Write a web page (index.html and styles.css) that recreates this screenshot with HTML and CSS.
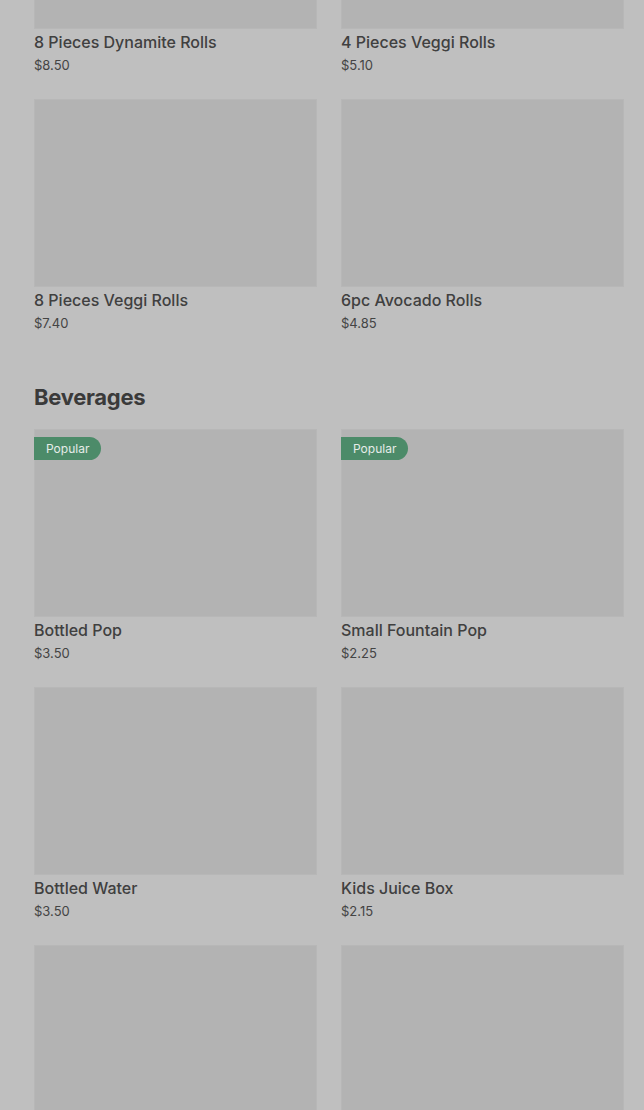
FILE: index.html
```html
<!DOCTYPE html>
<html lang="en">
<head>
    <meta charset="UTF-8">
    <meta name="viewport" content="width=device-width, initial-scale=1.0">
    <title>Menu</title>
    <link rel="stylesheet" href="styles.css">
</head>
<body>
    <main class="menu">
        <section class="menu-section">
            <div class="item-grid">
                <div class="item">
                    <div class="item-image"></div>
                    <div class="item-info">
                        <div class="item-name">8 Pieces Dynamite Rolls</div>
                        <div class="item-price">$8.50</div>
                    </div>
                </div>
                <div class="item">
                    <div class="item-image"></div>
                    <div class="item-info">
                        <div class="item-name">4 Pieces Veggi Rolls</div>
                        <div class="item-price">$5.10</div>
                    </div>
                </div>
                <div class="item">
                    <div class="item-image"></div>
                    <div class="item-info">
                        <div class="item-name">8 Pieces Veggi Rolls</div>
                        <div class="item-price">$7.40</div>
                    </div>
                </div>
                <div class="item">
                    <div class="item-image"></div>
                    <div class="item-info">
                        <div class="item-name">6pc Avocado Rolls</div>
                        <div class="item-price">$4.85</div>
                    </div>
                </div>
            </div>
        </section>

        <section class="menu-section">
            <h2 class="section-title">Beverages</h2>
            <div class="item-grid">
                <div class="item">
                    <div class="item-image">
                        <span class="badge">Popular</span>
                    </div>
                    <div class="item-info">
                        <div class="item-name">Bottled Pop</div>
                        <div class="item-price">$3.50</div>
                    </div>
                </div>
                <div class="item">
                    <div class="item-image">
                        <span class="badge">Popular</span>
                    </div>
                    <div class="item-info">
                        <div class="item-name">Small Fountain Pop</div>
                        <div class="item-price">$2.25</div>
                    </div>
                </div>
                <div class="item">
                    <div class="item-image"></div>
                    <div class="item-info">
                        <div class="item-name">Bottled Water</div>
                        <div class="item-price">$3.50</div>
                    </div>
                </div>
                <div class="item">
                    <div class="item-image"></div>
                    <div class="item-info">
                        <div class="item-name">Kids Juice Box</div>
                        <div class="item-price">$2.15</div>
                    </div>
                </div>
                <div class="item">
                    <div class="item-image"></div>
                </div>
                <div class="item">
                    <div class="item-image"></div>
                </div>
            </div>
        </section>
    </main>
</body>
</html>
```

FILE: styles.css
```css
* {
    margin: 0;
    padding: 0;
    box-sizing: border-box;
}

html, body {
    height: 100%;
    overflow: hidden;
}

body {
    font-family: 'Inter', 'Liberation Sans', sans-serif;
    background: #bfbfbf;
    color: #3d3d3d;
}

/* page is scrolled: first row of images is cut off at the top */
.menu {
    margin-top: -159px;
    padding: 0 20px 0 34px;
}

.menu-section + .menu-section {
    margin-top: 48px;
}

.section-title {
    font-size: 22px;
    font-weight: 700;
    line-height: 32px;
    letter-spacing: -0.3px;
    color: #3a3a3a;
    margin-bottom: 16px;
}

.item-grid {
    display: grid;
    grid-template-columns: 1fr 1fr;
    column-gap: 24px;
    row-gap: 24px;
}

.item-image {
    position: relative;
    height: 188px;
    background: #b3b3b3;
    border: 1px solid #b7b7b7;
}

.badge {
    position: absolute;
    top: 7px;
    left: -1px;
    height: 23px;
    padding: 0 12px;
    display: flex;
    align-items: center;
    font-size: 12px;
    color: #e6ece8;
    background: #4c8b69;
    border-radius: 0 12px 12px 0;
}

.item-info {
    padding-top: 2px;
}

.item-name {
    font-size: 16px;
    font-weight: 500;
    line-height: 22px;
    color: #404040;
}

.item-price {
    margin-top: 2px;
    font-size: 13px;
    line-height: 20px;
    color: #444;
}
```
